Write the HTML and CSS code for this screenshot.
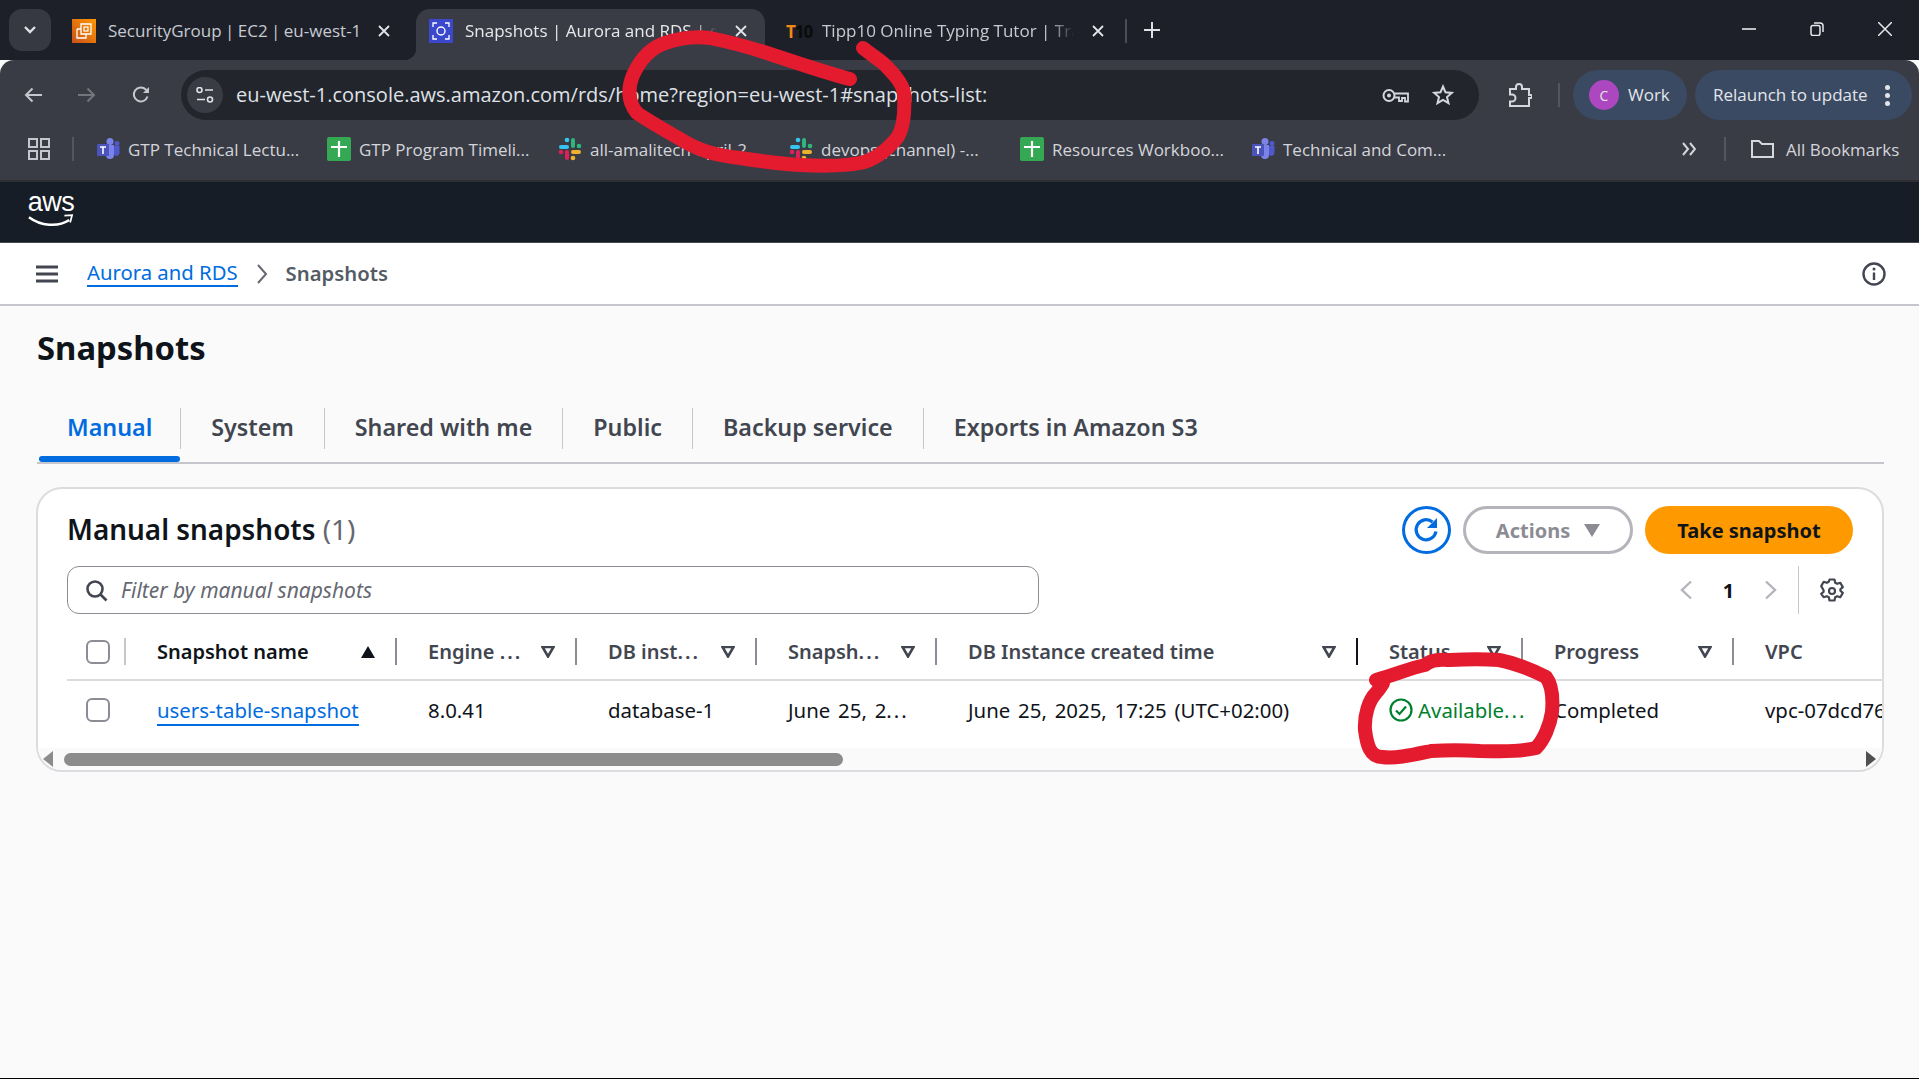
FILE: index.html
```html
<!DOCTYPE html>
<html lang="en">
<head>
    <meta charset="UTF-8">
    <meta name="viewport" content="width=device-width, initial-scale=1.0">
    <title>Snapshots | Aurora and RDS</title>
    <link rel="stylesheet" href="styles.css">
</head>
<body>

    <!-- browser tabs -->
    <div class="tabstrip">
        <button class="tab-search">
            <svg width="14" height="10" viewBox="0 0 14 10"><path d="M2 2l5 5 5-5" fill="none" stroke="#dfe1e6" stroke-width="2.4"/></svg>
        </button>
        <div class="btab btab-first">
            <svg class="favicon" viewBox="0 0 24 24"><defs><linearGradient id="ec2" x1="0" y1="1" x2="1" y2="0"><stop offset="0" stop-color="#c8511b"/><stop offset="1" stop-color="#ff9900"/></linearGradient></defs><rect width="24" height="24" fill="url(#ec2)"/><path d="M9 5h10v10H9zM5 10h4M5 10v9h9v-4" fill="none" stroke="#fff" stroke-width="1.3"/><rect x="12" y="8" width="4" height="4" fill="none" stroke="#fff" stroke-width="1.2"/></svg>
            <span class="btab-title">SecurityGroup | EC2 | eu-west-1</span>
            <svg class="btab-close" viewBox="0 0 12 12"><path d="M1 1l10 10M11 1L1 11"/></svg>
        </div>
        <div class="btab btab-active">
            <svg class="favicon" viewBox="0 0 24 24"><rect width="24" height="24" fill="#3b48cc"/><circle cx="12" cy="12" r="4" fill="none" stroke="#fff" stroke-width="1.4"/><path d="M4 8V4h4M16 4h4v4M20 16v4h-4M8 20H4v-4" fill="none" stroke="#fff" stroke-width="1.3"/></svg>
            <span class="btab-title">Snapshots | Aurora and RDS | eu-west-1</span>
            <svg class="btab-close" viewBox="0 0 12 12"><path d="M1 1l10 10M11 1L1 11"/></svg>
        </div>
        <div class="btab btab-last">
            <span class="tipp-icon"><span class="tipp-t">T</span>10</span>
            <span class="btab-title">Tipp10 Online Typing Tutor | Trainer</span>
            <svg class="btab-close" viewBox="0 0 12 12"><path d="M1 1l10 10M11 1L1 11"/></svg>
        </div>
        <span class="tab-sep"></span>
        <svg class="new-tab" width="16" height="16" viewBox="0 0 16 16"><path d="M8 0v16M0 8h16" stroke="#dfe1e6" stroke-width="2"/></svg>
        <div class="window-controls">
            <svg width="14" height="14" viewBox="0 0 14 14"><path d="M0 7h14" stroke="#e8e9ec" stroke-width="1.6"/></svg>
            <svg width="14" height="14" viewBox="0 0 14 14"><rect x="1" y="3.5" width="9" height="10" rx="2" fill="none" stroke="#e8e9ec" stroke-width="1.5"/><path d="M4 1h6a3 3 0 0 1 3 3v6" fill="none" stroke="#e8e9ec" stroke-width="1.5"/></svg>
            <svg width="14" height="14" viewBox="0 0 14 14"><path d="M0 0l14 14M14 0L0 14" stroke="#e8e9ec" stroke-width="1.5"/></svg>
        </div>
    </div>

    <!-- browser toolbar and bookmarks -->
    <div class="chrome">
        <div class="toolbar">
            <div class="nav-icons">
                <svg width="18" height="16" viewBox="0 0 18 16"><path d="M18 8H2M8.500 1.500L2 8l6.500 6.500" fill="none" stroke="#c4c7cd" stroke-width="2"/></svg>
                <svg width="18" height="16" viewBox="0 0 18 16"><path d="M0 8h16M9.500 1.500L16 8l-6.500 6.500" fill="none" stroke="#73767d" stroke-width="2"/></svg>
                <svg width="18" height="18" viewBox="0 0 18 18"><path d="M15.500 10.500A7 7 0 1 1 13.800 3.500L16 5.500" fill="none" stroke="#c4c7cd" stroke-width="2"/><path d="M17 1v6h-6z" fill="#c4c7cd"/></svg>
            </div>
            <div class="omnibox">
                <span class="tune">
                    <svg width="18" height="16" viewBox="0 0 18 16"><circle cx="3.500" cy="3" r="2.500" fill="none" stroke="#dfe1e6" stroke-width="1.600"/><path d="M9 3h8M1 12.500h8" stroke="#dfe1e6" stroke-width="1.600"/><circle cx="14" cy="12.500" r="2.500" fill="none" stroke="#dfe1e6" stroke-width="1.600"/></svg>
                </span>
                <span class="url">eu-west-1.console.aws.amazon.com/rds/home?region=eu-west-1#snapshots-list:</span>
                <svg class="key-icon" width="27" height="15" viewBox="0 0 27 15"><circle cx="7" cy="7.500" r="5.500" fill="none" stroke="#d5d7dc" stroke-width="2"/><circle cx="7" cy="7.500" r="2" fill="#d5d7dc"/><path d="M12.500 5.500H26v8h-3V10h-3v3h-3V9.500h-4.500" fill="none" stroke="#d5d7dc" stroke-width="1.800"/></svg>
                <svg class="star-icon" width="22" height="22" viewBox="0 0 22 22"><path d="M11 2.500l2.500 5.800 6.300.6-4.800 4.100 1.500 6.200L11 16l-5.500 3.200L7 13 2.200 8.900l6.300-.6z" fill="none" stroke="#d5d7dc" stroke-width="2"/></svg>
            </div>
            <svg class="puzzle-icon" width="24" height="25" viewBox="0 0 24 25"><path d="M2 6h6V4a3 3 0 0 1 6 0v2h7v6h1.500a1.500 1.500 0 0 1 0 3H21v8H2v-4.500h2a3 3 0 0 0 0-7H2z" fill="none" stroke="#d5d7dc" stroke-width="2"/></svg>
            <span class="toolbar-sep"></span>
            <div class="pill pill-work"><span class="avatar">C</span><span class="pill-label">Work</span></div>
            <div class="pill pill-relaunch"><span class="pill-label">Relaunch to update</span>
                <svg width="5" height="21" viewBox="0 0 5 21"><circle cx="2.500" cy="2.500" r="2.500"/><circle cx="2.500" cy="10.500" r="2.500"/><circle cx="2.500" cy="18.500" r="2.500"/></svg>
            </div>
        </div>
        <div class="bookmarks">
            <svg class="apps-icon" width="22" height="22" viewBox="0 0 22 22"><path d="M1 1h8v8H1zM13 1h8v8h-8zM1 13h8v8H1zM13 13h8v8h-8z" fill="none" stroke="#c4c7cd" stroke-width="2"/></svg>
            <span class="toolbar-sep bm-sep"></span>
            <div class="bm-list">
                <div class="bm">
                    <svg class="favicon" viewBox="0 0 24 24"><circle cx="14" cy="4.500" r="3.500" fill="#7b83eb"/><circle cx="21" cy="6.500" r="2.500" fill="#5059c9"/><path d="M10 8h8v10a4 4 0 0 1-8 0z" fill="#7b83eb"/><path d="M18 9h5.500v7a3 3 0 0 1-5.500 1.500z" fill="#5059c9"/><rect x="1" y="7" width="12" height="12" rx="1" fill="#4b53bc"/><path d="M4 10h6M7 10v7" stroke="#fff" stroke-width="1.600"/></svg>
                    <span>GTP Technical Lectu...</span>
                </div>
                <div class="bm">
                    <svg class="favicon" viewBox="0 0 24 24"><rect width="24" height="24" rx="2" fill="#34a853"/><path d="M12 4v16M4 10h16" stroke="#fff" stroke-width="2.200"/></svg>
                    <span>GTP Program Timeli...</span>
                </div>
                <div class="bm">
                    <svg class="favicon" viewBox="0 0 24 24"><use href="#slack"/></svg>
                    <span>all-amalitech-april-2...</span>
                </div>
                <div class="bm">
                    <svg class="favicon" viewBox="0 0 24 24"><use href="#slack"/></svg>
                    <span>devops (channel) -...</span>
                </div>
                <div class="bm">
                    <svg class="favicon" viewBox="0 0 24 24"><rect width="24" height="24" rx="2" fill="#34a853"/><path d="M12 4v16M4 10h16" stroke="#fff" stroke-width="2.200"/></svg>
                    <span>Resources Workboo...</span>
                </div>
                <div class="bm">
                    <svg class="favicon" viewBox="0 0 24 24"><circle cx="14" cy="4.500" r="3.500" fill="#7b83eb"/><circle cx="21" cy="6.500" r="2.500" fill="#5059c9"/><path d="M10 8h8v10a4 4 0 0 1-8 0z" fill="#7b83eb"/><path d="M18 9h5.500v7a3 3 0 0 1-5.500 1.500z" fill="#5059c9"/><rect x="1" y="7" width="12" height="12" rx="1" fill="#4b53bc"/><path d="M4 10h6M7 10v7" stroke="#fff" stroke-width="1.600"/></svg>
                    <span>Technical and Com...</span>
                </div>
            </div>
            <svg class="more-icon" width="14" height="14" viewBox="0 0 14 14"><path d="M1 1l5 6-5 6M8 1l5 6-5 6" fill="none" stroke="#d5d7dc" stroke-width="2"/></svg>
            <span class="toolbar-sep more-sep"></span>
            <svg class="folder-icon" width="23" height="18" viewBox="0 0 23 18"><path d="M1 17V1h7l3 3h11v13z" fill="none" stroke="#d5d7dc" stroke-width="2"/></svg>
            <span class="all-bm">All Bookmarks</span>
        </div>
    </div>

    <svg class="defs"><defs><g id="slack">
        <rect x="1" y="8" width="10" height="4" rx="2" fill="#36c5f0"/><circle cx="9" cy="3" r="2.300" fill="#36c5f0"/>
        <rect x="13" y="1" width="4" height="10" rx="2" fill="#2eb67d"/><circle cx="21" cy="9" r="2.300" fill="#2eb67d"/>
        <rect x="13" y="13" width="10" height="4" rx="2" fill="#ecb22e"/><circle cx="15" cy="21" r="2.300" fill="#ecb22e"/>
        <rect x="7" y="13" width="4" height="10" rx="2" fill="#e01e5a"/><circle cx="3" cy="15" r="2.300" fill="#e01e5a"/>
    </g></defs></svg>

    <!-- aws console -->
    <header class="aws-bar">
        <div class="aws-logo">
            <span class="aws-text">aws</span>
            <svg width="46" height="14" viewBox="0 0 48 14"><path d="M1 3c12 9 30 11 42 3" fill="none" stroke="#fff" stroke-width="2.600"/><path d="M38 1.500l8-.5-2 7.500" fill="none" stroke="#fff" stroke-width="1.800"/></svg>
        </div>
    </header>

    <nav class="crumbs">
        <svg class="menu-icon" width="22" height="18" viewBox="0 0 22 18"><path d="M0 2h22M0 9h22M0 16h22" stroke="#424650" stroke-width="3"/></svg>
        <a class="crumb-link">Aurora and RDS</a>
        <svg class="crumb-chevron" width="12" height="20" viewBox="0 0 12 20"><path d="M2 1l8 9-8 9" fill="none" stroke="#656871" stroke-width="2"/></svg>
        <span class="crumb-current">Snapshots</span>
        <svg class="info-icon" width="24" height="24" viewBox="0 0 24 24"><circle cx="12" cy="12" r="10.500" fill="none" stroke="#424650" stroke-width="2.400"/><path d="M12 10.500V18" stroke="#424650" stroke-width="2.400"/><circle cx="12" cy="7" r="1.500" fill="#424650"/></svg>
    </nav>

    <main class="content">
        <h1>Snapshots</h1>

        <div class="tabs">
            <a class="tab tab-active">Manual</a>
            <a class="tab">System</a>
            <a class="tab">Shared with me</a>
            <a class="tab">Public</a>
            <a class="tab">Backup service</a>
            <a class="tab tab-end">Exports in Amazon S3</a>
        </div>

        <section class="card">
            <div class="card-head">
                <h2>Manual snapshots <span class="count">(1)</span></h2>
                <button class="btn-refresh">
                    <svg width="30" height="30" viewBox="0 0 30 30"><path d="M24 16.500A10 10 0 1 1 20.500 7" fill="none" stroke="#006ce0" stroke-width="3.200"/><path d="M25 3v10H15z" fill="#006ce0"/></svg>
                </button>
                <button class="btn-actions">Actions <svg width="16" height="13" viewBox="0 0 16 13"><path d="M0 0h16l-8 13z" fill="#8c8c94"/></svg></button>
                <button class="btn-primary">Take snapshot</button>
            </div>

            <div class="filter-row">
                <div class="filter">
                    <svg width="23" height="23" viewBox="0 0 23 23"><circle cx="10" cy="10" r="7.500" fill="none" stroke="#424650" stroke-width="2.600"/><path d="M15.500 15.500L21.500 21.500" stroke="#424650" stroke-width="2.600"/></svg>
                    <span>Filter by manual snapshots</span>
                </div>
                <div class="pager">
                    <svg width="13" height="20" viewBox="0 0 13 20"><path d="M11 1.500L2 10l9 8.500" fill="none" stroke="#b4b4bb" stroke-width="2.400"/></svg>
                    <span class="page-num">1</span>
                    <svg width="13" height="20" viewBox="0 0 13 20"><path d="M2 1.500L11 10l-9 8.500" fill="none" stroke="#b4b4bb" stroke-width="2.400"/></svg>
                </div>
                <div class="prefs">
                    <svg width="24" height="24" viewBox="0 0 24 24"><path d="M9.500 1.500h5l.7 3.200 2 1.100 3.100-1 2.500 4.300-2.400 2.200v1.400l2.400 2.200-2.500 4.300-3.100-1-2 1.100-.7 3.200h-5l-.7-3.200-2-1.100-3.100 1L1.200 15.900l2.400-2.200v-1.400L1.200 8.100l2.500-4.300 3.100 1 2-1.100z" fill="none" stroke="#424650" stroke-width="2.200" stroke-linejoin="round"/><circle cx="12" cy="13" r="3" fill="none" stroke="#424650" stroke-width="2.200"/></svg>
                </div>
            </div>

            <div class="table">
                <div class="row row-head">
                    <div class="th th-check"><span class="checkbox"></span></div>
                    <div class="th th-sorted">Snapshot name <svg width="14" height="12" viewBox="0 0 14 12"><path d="M7 0l7 12H0z" fill="#0f141a"/></svg></div>
                    <div class="th"><span>Engine <span class="dots">...</span></span> <svg class="filter-tri" viewBox="0 0 14 12"><path d="M1.500 1h11L7 10.500z"/></svg></div>
                    <div class="th"><span>DB inst<span class="dots">...</span></span> <svg class="filter-tri" viewBox="0 0 14 12"><path d="M1.500 1h11L7 10.500z"/></svg></div>
                    <div class="th"><span>Snapsh<span class="dots">...</span></span> <svg class="filter-tri" viewBox="0 0 14 12"><path d="M1.500 1h11L7 10.500z"/></svg></div>
                    <div class="th th-dark">DB Instance created time <svg class="filter-tri" viewBox="0 0 14 12"><path d="M1.500 1h11L7 10.500z"/></svg></div>
                    <div class="th">Status <svg class="filter-tri" viewBox="0 0 14 12"><path d="M1.500 1h11L7 10.500z"/></svg></div>
                    <div class="th">Progress <svg class="filter-tri" viewBox="0 0 14 12"><path d="M1.500 1h11L7 10.500z"/></svg></div>
                    <div class="th th-end">VPC</div>
                </div>
                <div class="row row-body">
                    <div class="td td-check"><span class="checkbox"></span></div>
                    <div class="td"><a class="snap-link">users-table-snapshot</a></div>
                    <div class="td">8.0.41</div>
                    <div class="td">database-1</div>
                    <div class="td">June 25, 2<span class="dots">...</span></div>
                    <div class="td">June 25, 2025, 17:25 (UTC+02:00)</div>
                    <div class="td td-status">
                        <svg width="24" height="24" viewBox="0 0 24 24"><circle cx="12" cy="12" r="10.500" fill="none" stroke="#00802f" stroke-width="2.200"/><path d="M7 12.500l3.500 3.500L17 8.500" fill="none" stroke="#00802f" stroke-width="2.200"/></svg>
                        <span>Available<span class="dots">...</span></span>
                    </div>
                    <div class="td">Completed</div>
                    <div class="td td-clip">vpc-07dcd76f2a1b</div>
                </div>
            </div>

            <div class="scrollbar">
                <svg width="12" height="16" viewBox="0 0 12 16"><path d="M11 0v16L1 8z" fill="#8c8c8c"/></svg>
                <span class="thumb"></span>
                <svg class="scroll-right" width="12" height="16" viewBox="0 0 12 16"><path d="M1 0v16l10-8z" fill="#505050"/></svg>
            </div>
        </section>
    </main>

    <!-- marker scribbles drawn over the screenshot -->
    <svg class="scribbles" width="1919" height="1079" viewBox="0 0 1919 1079">
        <path d="M850 79C830 74 800 64 773 55C755 49 735 43 710 38C695 36 680 38 665 43C650 48 640 60 633 75C627 90 628 102 637 113C650 122 668 132 687 143C705 153 722 156 740 158C760 161 780 164 800 165C820 166 845 166 860 163C875 160 887 150 897 138C904 128 905 110 904 93C902 82 892 72 883 63C875 57 868 52 863 48"/>
        <path d="M1376 680C1395 675 1410 668 1425 665C1433 658 1445 660 1450 660C1468 659 1485 659 1499 660C1515 663 1536 672 1546 677C1552 685 1553 700 1552 712C1550 725 1544 740 1536 748C1515 753 1497 751 1480 751C1463 750 1447 750 1431 751C1412 755 1395 759 1382 757C1370 757 1367 745 1365 730C1364 715 1369 700 1376 693C1380 688 1382 685 1383 683"/>
    </svg>

</body>
</html>
```

FILE: styles.css
```css
* {
    box-sizing: border-box;
}
html, body {
    margin: 0;
    height: 1079px;
    overflow: hidden;
}
body {
    position: relative;
    display: flex;
    flex-direction: column;
    background: #fafafa;
    border-bottom: 1px solid #000;
    font-family: "Noto Sans", "Open Sans", sans-serif;
    color: #0f141a;
}
svg {
    flex-shrink: 0;
}
button {
    font-family: inherit;
    cursor: pointer;
}
.defs {
    position: absolute;
    width: 0;
    height: 0;
}

/* browser tabs */
.tabstrip {
    height: 60px;
    display: flex;
    align-items: flex-end;
    background: #1d2029;
    font-family: "Open Sans", "Noto Sans", sans-serif;
    font-size: 17px;
    color: #c7cad1;
}
.tab-search {
    width: 42px;
    height: 42px;
    margin: 0 0 9px 9px;
    display: flex;
    align-items: center;
    justify-content: center;
    border: none;
    border-radius: 13px;
    background: #363941;
}
.btab {
    height: 51px;
    display: flex;
    align-items: center;
    padding-bottom: 7px;
    position: relative;
}
.btab-first {
    width: 365px;
    padding-left: 21px;
    padding-right: 26px;
}
.btab-active {
    width: 349px;
    padding-left: 13px;
    padding-right: 18px;
    background: #3a3c45;
    border-radius: 14px 14px 0 0;
    color: #e8e9ec;
}
.btab-active::before {
    content: "";
    position: absolute;
    left: -12px;
    bottom: 0;
    width: 12px;
    height: 12px;
    background: radial-gradient(circle at 0 0, transparent 12px, #3a3c45 12.500px);
}
.btab-last {
    width: 360px;
    padding-left: 21px;
    padding-right: 21px;
}
.favicon {
    width: 24px;
    height: 24px;
}
.btab-title {
    flex: 1;
    margin-left: 12px;
    padding-bottom: 2px;
    white-space: nowrap;
    overflow: hidden;
    mask-image: linear-gradient(to left, transparent 0, #000 24px);
}
.btab-first .btab-title {
    mask-image: none;
    word-spacing: -1px;
}
.btab-close {
    width: 12px;
    height: 12px;
    margin-left: 18px;
    fill: none;
    stroke: #e3e4e8;
    stroke-width: 1.800;
}
.tipp-icon {
    width: 24px;
    font-size: 17px;
    font-weight: 700;
    color: #0b0b0b;
    letter-spacing: -1px;
}
.tipp-t {
    color: #f28a16;
}
.tab-sep {
    width: 2px;
    height: 24px;
    background: #4a4d55;
    margin: 0 17px 17px 0;
}
.new-tab {
    margin-bottom: 22px;
}
.window-controls {
    margin-left: auto;
    margin-right: 27px;
    margin-bottom: 24px;
    display: flex;
    gap: 54px;
}

/* browser toolbar */
.chrome {
    height: 122px;
    background: #3a3c45;
    border-bottom: 2px solid #2e2f33;
    border-radius: 14px 14px 0 0;
    font-family: "Open Sans", "Noto Sans", sans-serif;
    color: #d3d5db;
}
.toolbar {
    height: 60px;
    padding-top: 10px;
    display: flex;
    align-items: center;
}
.nav-icons {
    width: 181px;
    padding-left: 24px;
    display: flex;
    align-items: center;
    gap: 36px;
}
.omnibox {
    width: 1298px;
    height: 50px;
    display: flex;
    align-items: center;
    padding-left: 6px;
    border-radius: 25px;
    background: #22252c;
}
.tune {
    width: 36px;
    height: 36px;
    border-radius: 50%;
    background: #3a3c45;
    display: flex;
    align-items: center;
    justify-content: center;
}
.url {
    flex: 1;
    margin-left: 13px;
    padding-bottom: 2px;
    font-size: 20px;
    color: #dfe1e6;
    white-space: nowrap;
}
.star-icon {
    margin: 0 25px 0 23px;
}
.puzzle-icon {
    margin-left: 29px;
}
.toolbar-sep {
    width: 2px;
    height: 24px;
    background: #54565e;
    margin: 0 13px 0 26px;
}
.pill {
    height: 50px;
    display: flex;
    align-items: center;
    border-radius: 25px;
    background: #3a4a63;
    font-size: 17px;
    color: #e3e5ea;
}
.pill-label {
    padding-bottom: 2px;
}
.pill-work {
    width: 114px;
    padding-left: 16px;
    gap: 9px;
}
.avatar {
    width: 30px;
    height: 30px;
    border-radius: 50%;
    background: #ac47c0;
    display: flex;
    align-items: center;
    justify-content: center;
    font-size: 14px;
}
.pill-relaunch {
    width: 217px;
    margin-left: 8px;
    padding: 0 22px 0 18px;
    justify-content: space-between;
    white-space: nowrap;
}
.pill-relaunch svg {
    fill: #e3e5ea;
}
.bookmarks {
    height: 60px;
    padding-bottom: 2px;
    display: flex;
    align-items: center;
    font-size: 17px;
    white-space: nowrap;
}
.apps-icon {
    margin-left: 28px;
}
.bm-sep {
    margin: 0 22px 0 22px;
}
.bm-list {
    width: 1587px;
    display: flex;
}
.bm {
    width: 231px;
    display: flex;
    align-items: center;
    gap: 8px;
}
.more-sep {
    margin: 0 25px 0 28px;
}
.more-icon {
    margin-left: -1px;
}
.all-bm {
    margin-left: 12px;
}

/* aws console */
.aws-bar {
    height: 61px;
    background: #161d26;
    border-bottom: 1px solid #434750;
    padding: 8px 0 0 28px;
    flex-shrink: 0;
}
.aws-logo {
    width: 46px;
    display: flex;
    flex-direction: column;
    align-items: center;
}
.aws-text {
    font-family: "Liberation Sans", sans-serif;
    font-size: 27px;
    line-height: 25px;
    color: #fff;
    letter-spacing: -0.500px;
}
.aws-logo svg {
    margin-top: -1px;
}
.crumbs {
    height: 63px;
    background: #fff;
    border-bottom: 2px solid #c6c6cd;
    display: flex;
    align-items: center;
    padding: 0 0 0 36px;
    font-size: 20.300px;
    flex-shrink: 0;
}
.crumb-link {
    margin-left: 29px;
    color: #006ce0;
    border-bottom: 2px solid #006ce0;
    line-height: 25px;
}
.crumb-chevron {
    margin: 0 18px;
}
.crumb-current {
    padding-bottom: 2px;
    font-weight: 600;
    color: #545b64;
}
.info-icon {
    margin-left: auto;
    margin-right: 33px;
}

.content {
    flex: 1;
    padding: 22px 35px 0 37px;
}
h1 {
    margin: 0;
    font-size: 32.800px;
    line-height: 40px;
    font-weight: 700;
}
.tabs {
    margin-top: 40px;
    display: flex;
    align-items: flex-start;
    height: 56px;
    border-bottom: 2px solid #c6c6cd;
}
.tab {
    position: relative;
    height: 41px;
    padding: 0 30px 4px;
    display: flex;
    align-items: center;
    border-right: 1px solid #c6c6cd;
    font-size: 23.300px;
    font-weight: 600;
    color: #424650;
}
.tab-end {
    border-right: none;
}
.tab-active {
    padding-right: 28px;
    color: #006ce0;
}
.tab-active::after {
    content: "";
    position: absolute;
    left: 2px;
    right: 0;
    top: 48px;
    height: 6px;
    border-radius: 3px;
    background: #006ce0;
}

/* card */
.card {
    margin: 23px 0 0 -1px;
    height: 285px;
    background: #fff;
    border: 2px solid #dcdce0;
    border-radius: 26px;
    overflow: hidden;
    display: flex;
    flex-direction: column;
}
.card-head {
    margin-top: 17px;
    padding: 0 29px;
    height: 48px;
    display: flex;
    align-items: center;
}
h2 {
    margin: 0 auto 0 0;
    padding-bottom: 2px;
    font-size: 27.900px;
    font-weight: 600;
}
.count {
    font-weight: 400;
    color: #656871;
}
.btn-refresh {
    width: 49px;
    height: 48px;
    padding: 0;
    border: 3px solid #006ce0;
    border-radius: 50%;
    background: #fff;
    display: flex;
    align-items: center;
    justify-content: center;
}
.btn-actions {
    width: 170px;
    height: 48px;
    margin-left: 12px;
    border: 3px solid #b4b4bb;
    border-radius: 24px;
    background: #fff;
    font-size: 20px;
    font-weight: 700;
    color: #8c8c94;
    display: flex;
    align-items: center;
    justify-content: center;
    gap: 14px;
}
.btn-primary {
    width: 208px;
    height: 48px;
    margin-left: 12px;
    border: none;
    border-radius: 24px;
    background: #ff9900;
    font-size: 20px;
    font-weight: 700;
    color: #0f141a;
}
.filter-row {
    margin-top: 12px;
    padding-left: 29px;
    height: 48px;
    display: flex;
    align-items: center;
}
.filter {
    width: 972px;
    height: 48px;
    display: flex;
    align-items: center;
    gap: 13px;
    padding-left: 17px;
    border: 1px solid #8c8c94;
    border-radius: 12px;
    background: #fff;
    font-size: 21px;
    font-style: italic;
    color: #656871;
}
.pager {
    margin-left: auto;
    width: 97px;
    display: flex;
    align-items: center;
    justify-content: space-between;
}
.page-num {
    font-size: 20px;
    font-weight: 700;
}
.prefs {
    height: 48px;
    margin-left: 21px;
    width: 84px;
    padding-left: 21px;
    display: flex;
    align-items: center;
    border-left: 1px solid #c6c6cd;
}

/* table */
.table {
    margin-left: 29px;
    margin-top: 10px;
    font-size: 20px;
}
.row {
    display: grid;
    grid-template-columns: 59px 271px 180px 180px 180px 421px 165px 211px 1fr;
    align-items: center;
    white-space: nowrap;
}
.row-head {
    height: 57px;
    border-bottom: 2px solid #dcdce0;
}
.row-body {
    height: 67px;
    padding-bottom: 10px;
    font-size: 20.400px;
}
.th {
    height: 27px;
    padding: 0 20px 0 31px;
    display: flex;
    align-items: center;
    justify-content: space-between;
    border-right: 2px solid #8c8c94;
    font-weight: 600;
    color: #424650;
}
.th-check {
    padding: 0 0 0 19px;
    border-right-color: #c6c6cd;
    justify-content: flex-start;
}
.th-sorted {
    color: #0f141a;
}
.th-dark {
    border-right-color: #0f141a;
}
.th-end {
    border-right: none;
}
.dots {
    letter-spacing: 2px;
}
.checkbox {
    width: 24px;
    height: 24px;
    border: 2px solid #8c8c94;
    border-radius: 6px;
    background: #fff;
    display: block;
}
.filter-tri {
    width: 14px;
    height: 12px;
    fill: none;
    stroke: #424650;
    stroke-width: 2.600;
}
.td {
    padding-left: 31px;
    color: #0f141a;
    word-spacing: 2.500px;
}
.td-check {
    padding-left: 19px;
}
.snap-link {
    color: #006ce0;
    border-bottom: 2px solid #006ce0;
}
.td-status {
    display: flex;
    align-items: center;
    gap: 5px;
    color: #00802f;
}
.td-clip {
    overflow: hidden;
}
.scrollbar {
    flex: 1;
    background: #fafafa;
    display: flex;
    align-items: center;
    padding: 0 5px 0 4px;
}
.thumb {
    width: 779px;
    height: 13px;
    margin-left: 10px;
    border-radius: 7px;
    background: #8c8c8c;
}
.scroll-right {
    margin-left: auto;
}

/* red marker */
.scribbles {
    position: absolute;
    left: 0;
    top: 0;
    pointer-events: none;
    fill: none;
    stroke: #e41b2f;
    stroke-width: 14;
    stroke-linecap: round;
    stroke-linejoin: round;
}
```
